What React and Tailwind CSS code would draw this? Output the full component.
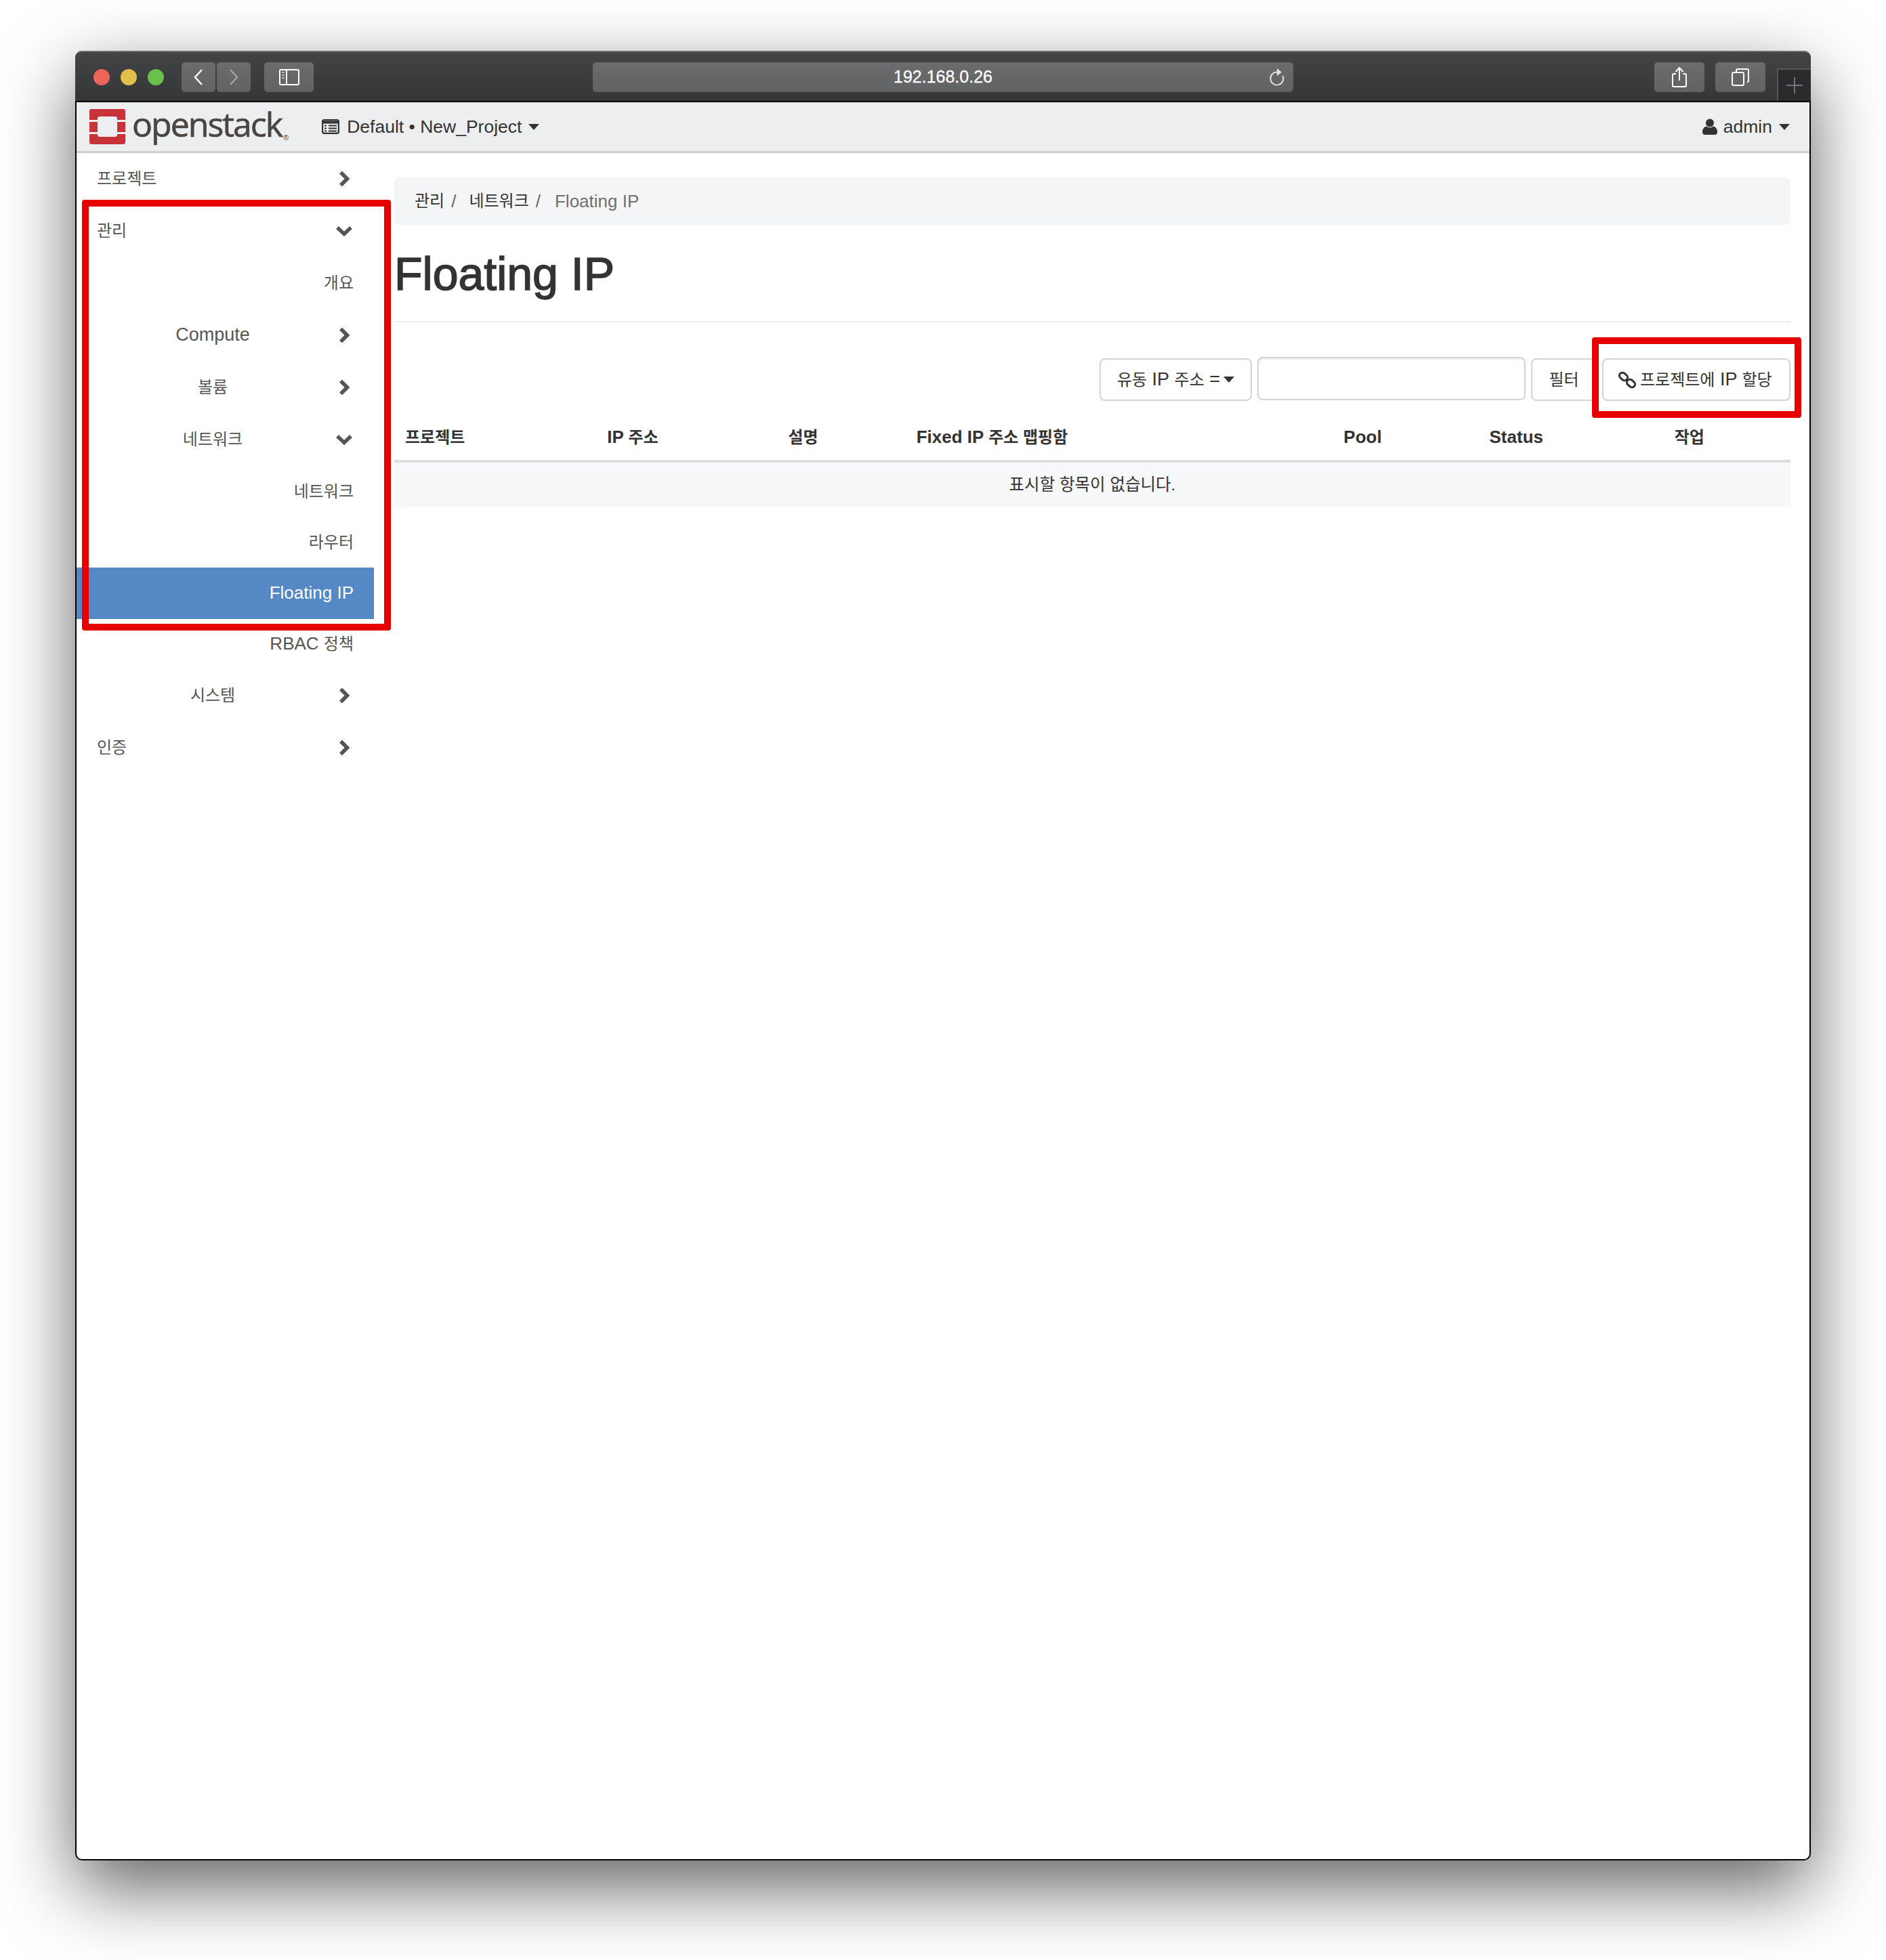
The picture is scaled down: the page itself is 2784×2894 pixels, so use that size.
import React from 'react'

const FONT = 'font-["Liberation_Sans","Noto_Sans_CJK_KR",sans-serif]'

// hangul is set a little smaller than latin so the widths line up with the Apple fonts
const K = ({ children }) => <span className="text-[24px]">{children}</span>

const ChevronRight = () => (
    <svg width="26" height="26" viewBox="0 0 26 26" className="shrink-0">
        <path d="M8 3.5 L17.5 13 L8 22.5" fill="none" stroke="#555" strokeWidth="5.5" strokeLinejoin="miter" />
    </svg>
)

const ChevronDown = () => (
    <svg width="26" height="26" viewBox="0 0 26 26" className="shrink-0">
        <path d="M3 8 L13 17.5 L23 8" fill="none" stroke="#555" strokeWidth="5.5" strokeLinejoin="miter" />
    </svg>
)

const Caret = ({ className = '' }) => (
    <svg width="16" height="9" viewBox="0 0 16 9" className={className}>
        <path d="M0 0 H16 L8 9 Z" fill="#333" />
    </svg>
)

const ToolbarButton = ({ className = '', children }) => (
    <div className={`h-[44px] flex items-center justify-center rounded-[5px] bg-gradient-to-b from-[#6b6c6e] to-[#616264] ${className}`}>
        {children}
    </div>
)

const Logo = () => (
    <svg width="53" height="52" viewBox="0 0 53 52" className="shrink-0">
        <path
            d="M3 0 H50 Q53 0 53 3 V16 H41 V14 Q41 11 38 11 H15 Q12 11 12 14 V16 H0 V3 Q0 0 3 0 Z"
            fill="#c8333a"
        />
        <path d="M0 19 H12 V34 H0 Z M41 19 H53 V34 H41 Z" fill="#c8333a" />
        <path
            d="M0 37 H12 V38 Q12 41 15 41 H38 Q41 41 41 38 V37 H53 V49 Q53 52 50 52 H3 Q0 52 0 49 Z"
            fill="#c8333a"
        />
    </svg>
)

const LinkIcon = () => (
    <svg width="26" height="26" viewBox="0 0 26 26" className="shrink-0">
        <rect x="1" y="3.5" width="13" height="9" rx="4.5" transform="rotate(40 7.5 8)" fill="none" stroke="#333" strokeWidth="3" />
        <rect x="12" y="13.5" width="13" height="9" rx="4.5" transform="rotate(40 18.5 18)" fill="none" stroke="#333" strokeWidth="3" />
    </svg>
)

const SideItem = ({ label, level = 0, open, arrow, active, height = 'h-[77px]' }) => {
    if (!arrow) {
        return (
            <div className={`${height} flex items-center justify-end pr-[30px] ${active ? 'bg-[#5589c6] text-white' : ''}`}>
                <span>{label}</span>
            </div>
        )
    }
    return (
        <div className={`${height} flex items-center pr-[31px]`}>
            <div className={level === 0 ? 'flex-1 pl-[30px]' : 'flex-1 text-center pl-[20px]'}>{label}</div>
            {open ? <ChevronDown /> : <ChevronRight />}
        </div>
    )
}

const Sidebar = () => (
    <div className="w-[439px] shrink-0 text-[#555] text-[26.5px] -mt-[1px]">
        <SideItem arrow label={<K>프로젝트</K>} />
        <SideItem arrow open label={<K>관리</K>} />
        <SideItem label={<K>개요</K>} />
        <SideItem arrow level={1} label={<span className="text-[27px]">Compute</span>} />
        <SideItem arrow level={1} label={<K>볼륨</K>} />
        <SideItem arrow open level={1} height="h-[78px]" label={<K>네트워크</K>} />
        <SideItem height="h-[76px]" label={<K>네트워크</K>} />
        <SideItem height="h-[74px]" label={<K>라우터</K>} />
        <SideItem active height="h-[76px]" label={<span className="text-[26px]">Floating IP</span>} />
        <SideItem height="h-[74px]" label={<span className="text-[26px]">RBAC <K>정책</K></span>} />
        <SideItem arrow level={1} label={<K>시스템</K>} />
        <SideItem arrow label={<K>인증</K>} />
    </div>
)

const FilterButton = ({ className = '', children }) => (
    <div className={`h-[63px] flex items-center justify-center bg-white border-2 border-[#d4d4d4] rounded-[8px] text-[#333] ${className}`}>
        {children}
    </div>
)

const columns = [
    { width: 'w-[298px]', label: <K>프로젝트</K> },
    { width: 'w-[267px]', label: <>IP <K>주소</K></> },
    { width: 'w-[189px]', label: <K>설명</K> },
    { width: 'w-[630px]', label: <>Fixed IP <K>주소 맵핑함</K></> },
    { width: 'w-[215px]', label: 'Pool' },
    { width: 'w-[273px]', label: 'Status' },
    { width: 'w-[187px]', label: <K>작업</K> },
]

const Content = () => (
    <div className="flex-1 pl-[30px] pr-[28px] pt-[36px] text-[#333] text-[27px]">
        <div className="h-[70px] flex items-center bg-[#f4f5f6] rounded-[8px] pl-[30px]">
            <K>관리</K>
            <span className="ml-[10px] mr-[19px] text-[#666] text-[26px]">/</span>
            <K>네트워크</K>
            <span className="ml-[10px] mr-[21px] text-[#666] text-[26px]">/</span>
            <span className="text-[#707070] text-[26px]">Floating IP</span>
        </div>
        <div className="h-[144px] flex items-center border-b-2 border-[#eee]">
            <h1 className="text-[68px] leading-none font-normal text-[#333] [-webkit-text-stroke:1.5px_#333] pt-[1px]">Floating IP</h1>
        </div>
        <div className="flex justify-end items-start gap-[8px] mt-[53px]">
            <FilterButton className="w-[225px]">
                <K>유동</K>&nbsp;IP&nbsp;<K>주소</K>&nbsp;=
                <Caret className="ml-[5px]" />
            </FilterButton>
            <div className="w-[396px] h-[64px] -mt-[2px] bg-white border-2 border-[#d4d4d4] rounded-[8px] shadow-[inset_0_2px_2px_rgba(0,0,0,0.08)]" />
            <FilterButton className="w-[97px]">
                <K>필터</K>
            </FilterButton>
            <FilterButton className="w-[278px] gap-[6px] !justify-start pl-[22px]">
                <LinkIcon />
                <span className="whitespace-nowrap">
                    <K>프로젝트에</K> IP <K>할당</K>
                </span>
            </FilterButton>
        </div>
        <table className="w-full table-fixed mt-[24px]">
            <thead>
                <tr className="h-[65px] border-b-4 border-[#dcdde0]">
                    {columns.map((col, idx) => (
                        <th key={idx} className={`${col.width} text-left font-bold text-[26px] pl-[16px] pb-[5px]`}>
                            {col.label}
                        </th>
                    ))}
                </tr>
            </thead>
            <tbody>
                <tr className="h-[68px] bg-[#f7f8f9]">
                    <td colSpan={7} className="text-center pb-[2px]">
                        <span className="text-[24.5px]">표시할 항목이 없습니다.</span>
                    </td>
                </tr>
            </tbody>
        </table>
    </div>
)

const App = () => {
    return (
        <div className={`w-[2784px] h-[2894px] bg-white pt-[75px] pl-[111px] ${FONT}`}>
            <div className="relative w-[2562px] h-[2672px] flex flex-col bg-white border-x-2 border-b-2 border-black rounded-[10px] shadow-[0_40px_110px_rgba(0,0,0,0.62)]">
                {/* safari chrome */}
                <div className="relative h-[76px] -mx-[2px] shrink-0 flex items-center pl-[27px] pt-[1px] rounded-t-[10px] bg-gradient-to-b from-[#434446] to-[#353638] border-t-2 border-[#6a6b6d] border-b-2 border-b-black">
                    <div className="flex gap-[16px]">
                        <div className="w-[24px] h-[24px] rounded-full bg-[#ec6559]" />
                        <div className="w-[24px] h-[24px] rounded-full bg-[#e1c04c]" />
                        <div className="w-[24px] h-[24px] rounded-full bg-[#6cc04a]" />
                    </div>
                    <div className="flex gap-[2px] ml-[26px]">
                        <ToolbarButton className="w-[50px]">
                            <svg width="16" height="26" viewBox="0 0 16 26">
                                <path d="M13 2 L3 13 L13 24" fill="none" stroke="#fff" strokeWidth="2.4" />
                            </svg>
                        </ToolbarButton>
                        <ToolbarButton className="w-[50px]">
                            <svg width="16" height="26" viewBox="0 0 16 26">
                                <path d="M3 2 L13 13 L3 24" fill="none" stroke="#a3a4a6" strokeWidth="2.4" />
                            </svg>
                        </ToolbarButton>
                    </div>
                    <ToolbarButton className="w-[73px] ml-[20px]">
                        <svg width="30" height="24" viewBox="0 0 30 24">
                            <rect x="1" y="1" width="28" height="22" rx="1.5" fill="none" stroke="#fff" strokeWidth="2" />
                            <path d="M11 1 V23" stroke="#fff" strokeWidth="2" />
                            <path d="M4 5 H8 M4 9 H8 M4 13 H8" stroke="#b9babb" strokeWidth="2" />
                        </svg>
                    </ToolbarButton>
                    <div className="relative w-[1034px] h-[44px] ml-[412px] pt-[1px] flex items-center justify-center rounded-[5px] bg-gradient-to-b from-[#6b6c6e] to-[#616264] text-white text-[25px] [-webkit-text-stroke:0.3px_#fff]">
                        192.168.0.26
                        <svg width="24" height="28" viewBox="0 0 24 28" className="absolute right-[12px] top-[8px]">
                            <path d="M12 6.5 A9.5 9.5 0 1 0 20.5 12" fill="none" stroke="#e0e0e0" strokeWidth="2" />
                            <path d="M12 1 L19 6.5 L12 12 Z" fill="#e0e0e0" />
                        </svg>
                    </div>
                    <ToolbarButton className="w-[74px] ml-[533px]">
                        <svg width="24" height="32" viewBox="0 0 24 32">
                            <path d="M7 11 H3.5 Q2 11 2 12.5 V28.5 Q2 30 3.5 30 H20.5 Q22 30 22 28.5 V12.5 Q22 11 20.5 11 H17" fill="none" stroke="#fff" strokeWidth="2" />
                            <path d="M12 2 V21" stroke="#fff" strokeWidth="2" />
                            <path d="M6.5 8 L12 2 L17.5 8" fill="none" stroke="#fff" strokeWidth="2" />
                        </svg>
                    </ToolbarButton>
                    <ToolbarButton className="w-[74px] ml-[16px]">
                        <svg width="26" height="26" viewBox="0 0 26 26">
                            <rect x="1" y="6" width="17" height="19" rx="2" fill="none" stroke="#fff" strokeWidth="2" />
                            <path d="M7 5 V3 Q7 1 9 1 H23 Q25 1 25 3 V18 Q25 20 23 20" fill="none" stroke="#fff" strokeWidth="2" />
                        </svg>
                    </ToolbarButton>
                    <div className="absolute right-0 top-[24px] bottom-0 w-[50px] flex items-center justify-center bg-[#2a2b2d] border-l-2 border-t-2 border-[#55565a]">
                        <svg width="24" height="24" viewBox="0 0 24 24">
                            <path d="M12 0 V24 M0 12 H24" stroke="#8b8c8e" strokeWidth="1.5" />
                        </svg>
                    </div>
                </div>

                {/* openstack top bar */}
                <div className="h-[75px] shrink-0 flex items-center bg-[#edeef0] border-b-[3px] border-[#cfcfcf] pl-[19px] pr-[29px] text-[#333] text-[26.5px]">
                    <Logo />
                    <span className="ml-[10px] font-['Open_Sans'] text-[50px] leading-none text-[#4b4642] tracking-[-2px] [-webkit-text-stroke:0.7px_#4b4642] -mt-[8px]">
                        openstack
                    </span>
                    <span className="self-end mb-[14px] ml-[2px] text-[11px] leading-none text-[#4b4642]">®</span>
                    <svg width="26" height="22" viewBox="0 0 26 22" className="ml-[49px] shrink-0">
                        <rect x="1" y="1" width="24" height="20" rx="3" fill="none" stroke="#333" strokeWidth="2.4" />
                        <path d="M1 4.5 H25" stroke="#333" strokeWidth="4" />
                        <path d="M4 9.5 H7 M10 9.5 H22 M4 13.5 H7 M10 13.5 H22 M4 17.5 H7 M10 17.5 H22" stroke="#333" strokeWidth="2" />
                    </svg>
                    <span className="ml-[11px] pt-[1px]">Default • New_Project</span>
                    <Caret className="ml-[10px]" />
                    <svg width="22" height="24" viewBox="0 0 22 24" className="ml-auto shrink-0">
                        <circle cx="11" cy="6.5" r="6" fill="#333" />
                        <path d="M0 20 Q0 13 6 11.5 Q11 15.5 16 11.5 Q22 13 22 20 Q22 24 18 24 H4 Q0 24 0 20 Z" fill="#333" />
                    </svg>
                    <span className="ml-[9px] text-[26.5px] pt-[1px]">admin</span>
                    <Caret className="ml-[10px]" />
                </div>

                <div className="flex flex-1">
                    <Sidebar />
                    <Content />
                </div>

                {/* red annotation boxes */}
                <div className="absolute left-[8px] top-[220px] w-[456px] h-[636px] border-[10px] border-[#e60000] rounded-[4px]" />
                <div className="absolute left-[2237px] top-[423px] w-[309px] h-[119px] border-[10px] border-[#e60000] rounded-[4px]" />
            </div>
        </div>
    )
}

export default App
